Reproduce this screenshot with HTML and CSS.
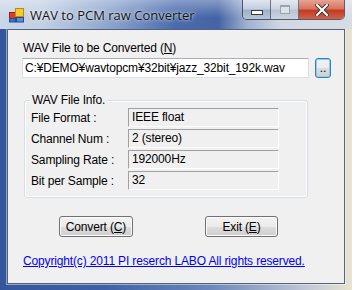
FILE: index.html
```html
<!DOCTYPE html>
<html lang="ja">
<head>
  <meta charset="UTF-8" />
  <title>WAV to PCM raw Converter</title>
  <link rel="stylesheet" href="styles.css">
</head>
<body>
  <div class="window">
    <div class="titlebar">
      <svg class="app-icon" width="16" height="16" viewBox="0 0 16 16">
        <rect x="0.5" y="5.5" width="6" height="6" fill="#e23a22" stroke="#9a2010"/>
        <rect x="6.5" y="1.5" width="8" height="8" fill="#f6cc2a" stroke="#c08a10"/>
        <rect x="0.5" y="11.5" width="6" height="3.5" fill="#3f6fc4" stroke="#234c94"/>
        <rect x="7.5" y="10.5" width="7" height="4.5" fill="#5c8ad6" stroke="#234c94"/>
      </svg>
      <span class="title">WAV to PCM raw Converter</span>
      <div class="caption-btns">
        <div class="cap cap-min"><span class="glyph-min"></span></div>
        <div class="cap cap-max"><span class="glyph-max"></span></div>
        <div class="cap cap-close">
          <svg width="14" height="12" viewBox="0 0 14 12">
            <path d="M2 1 L12 11 M12 1 L2 11" stroke="#3a3a3a" stroke-width="4" stroke-linecap="square"/>
            <path d="M2 1 L12 11 M12 1 L2 11" stroke="#ffffff" stroke-width="2" stroke-linecap="square"/>
          </svg>
        </div>
      </div>
    </div>

    <div class="client">
      <div class="file-label">WAV File to be Converted (<u>N</u>)</div>
      <div class="file-row">
        <input class="file-path" type="text" value="C:¥DEMO¥wavtopcm¥32bit¥jazz_32bit_192k.wav" />
        <button class="browse">..</button>
      </div>

      <div class="group">
        <span class="group-title">WAV File Info.</span>
        <div class="info-row"><span class="info-key">File Format :</span><span class="info-val">IEEE float</span></div>
        <div class="info-row"><span class="info-key">Channel Num :</span><span class="info-val">2 (stereo)</span></div>
        <div class="info-row"><span class="info-key">Sampling Rate :</span><span class="info-val">192000Hz</span></div>
        <div class="info-row"><span class="info-key">Bit per Sample :</span><span class="info-val">32</span></div>
      </div>

      <div class="actions">
        <button class="btn btn-convert">Convert (<u>C</u>)</button>
        <button class="btn btn-exit">Exit (<u>E</u>)</button>
      </div>

      <a class="copyright" href="#">Copyright(c) 2011 PI reserch LABO All rights reserved.</a>
    </div>
  </div>
</body>
</html>
```

FILE: styles.css
```css
body {
  margin: 0;
  width: 352px;
  height: 290px;
  overflow: hidden;
  font-family: "Liberation Sans", Arial, sans-serif;
}
.window {
  width: 352px;
  height: 290px;
  box-sizing: border-box;
  padding: 0 7px 6px 7px;
  background: linear-gradient(90deg, #34569a 0%, #3f62a6 30%, #6d88bb 60%, #c4cad6 88%, #e9e4d0 100%);
}
.titlebar {
  position: relative;
  height: 29px;
  margin: 0 -7px;
  padding-left: 9px;
  display: flex;
  align-items: flex-start;
  background:
    linear-gradient(180deg, rgba(255,255,255,0.35) 0%, rgba(255,255,255,0) 60%),
    linear-gradient(90deg, #c9d6e8 0%, #c2d0e4 12%, #8aa2cc 32%, #4a6aac 50%, #4464a6 62%, #9fb0cf 70%, #d2d8e2 80%, #d8dce4 100%);
}
.app-icon {
  margin-top: 7px;
}
.title {
  margin-left: 5px;
  margin-top: 6px;
  font-family: "Open Sans", sans-serif;
  font-size: 13px;
  color: #141414;
  text-shadow: 0 0 5px rgba(255,255,255,0.8), 0 0 2px rgba(255,255,255,0.6);
}
.caption-btns {
  margin-left: auto;
  margin-right: 7px;
  display: flex;
  height: 19px;
  border: 1px solid rgba(40,50,70,0.75);
  border-top: none;
  border-radius: 0 0 5px 5px;
  overflow: hidden;
}
.cap {
  height: 19px;
  display: flex;
  align-items: center;
  justify-content: center;
}
.cap-min {
  width: 27px;
  border-right: 1px solid rgba(40,50,70,0.6);
  background: linear-gradient(180deg, #dfe6f0 0%, #c3cfe0 45%, #9fb0ca 55%, #b9c6d8 100%);
}
.cap-max {
  width: 27px;
  border-right: 1px solid rgba(40,50,70,0.6);
  background: linear-gradient(180deg, #e4e9f0 0%, #ccd5e2 45%, #b8c4d4 55%, #ccd5e0 100%);
}
.cap-close {
  width: 45px;
  background: linear-gradient(180deg, #e8a393 0%, #d8755f 45%, #c43b22 55%, #d0604a 100%);
}
.glyph-min {
  width: 10px;
  height: 3px;
  margin-top: 5px;
  background: #fff;
  border: 1px solid #3a3a3a;
}
.glyph-max {
  width: 8px;
  height: 6px;
  border: 1px solid #9aa3b0;
  border-top-width: 2px;
  background: #dce2ea;
}

.client {
  width: 338px;
  height: 255px;
  box-sizing: border-box;
  border: 1px solid #566276;
  box-shadow: 0 0 0 1px rgba(255,255,255,0.45);
  background: #f0f0f0;
  padding-top: 11px;
  font-size: 12px;
  letter-spacing: -0.15px;
  color: #000;
}
.file-label {
  margin-left: 15px;
  line-height: 14px;
}
.file-row {
  display: flex;
  margin-top: 3px;
  margin-left: 14px;
}
.file-path {
  width: 287px;
  height: 20px;
  box-sizing: border-box;
  margin: 0;
  padding: 0 2px;
  border: 1px solid #dbdfe6;
  border-top-color: #abadb3;
  background: #fff;
  font-family: "Liberation Sans", Arial, sans-serif;
  font-size: 12px;
  letter-spacing: -0.15px;
  color: #000;
}
.browse {
  width: 16px;
  height: 20px;
  margin-left: 6px;
  padding: 0 0 3px 0;
  box-sizing: border-box;
  border: 1px solid #3c7fb1;
  border-radius: 3px;
  box-shadow: inset 0 0 0 1px #7fd0f6;
  background: linear-gradient(180deg, #f2f2f2 0%, #ebebeb 50%, #dddddd 50%, #cfcfcf 100%);
  font-family: "Liberation Sans", Arial, sans-serif;
  font-size: 12px;
  line-height: 12px;
  display: flex;
  align-items: flex-end;
  justify-content: center;
}

.group {
  position: relative;
  width: 284px;
  box-sizing: border-box;
  margin: 22px 0 0 16px;
  padding: 7px 0 7px 6px;
  border: 1px solid #d5dfe5;
  border-radius: 3px;
  box-shadow: inset 0 0 0 1px #ffffff;
  display: flex;
  flex-direction: column;
  gap: 2px;
}
.group-title {
  position: absolute;
  left: 5px;
  top: -8px;
  padding: 0 2px;
  background: #f0f0f0;
  line-height: 14px;
}
.info-row {
  display: flex;
  align-items: center;
  height: 19px;
}
.info-key {
  width: 97px;
}
.info-val {
  width: 151px;
  height: 19px;
  box-sizing: border-box;
  padding-left: 3px;
  line-height: 17px;
  border: 1px solid;
  border-color: #a0a0a0 #ffffff #ffffff #a0a0a0;
}

.actions {
  display: flex;
  margin: 18px 0 0 51px;
  gap: 72px;
}
.btn {
  height: 21px;
  box-sizing: border-box;
  padding: 0;
  border: 1px solid #707070;
  border-radius: 3px;
  box-shadow: inset 0 0 0 1px #fcfcfc;
  background: linear-gradient(180deg, #f2f2f2 0%, #ebebeb 50%, #dddddd 50%, #cfcfcf 100%);
  font-family: "Liberation Sans", Arial, sans-serif;
  font-size: 12px;
  letter-spacing: -0.15px;
  color: #000;
}
.btn-convert {
  width: 74px;
}
.btn-exit {
  width: 73px;
}
.copyright {
  display: block;
  margin: 17px 0 0 15px;
  line-height: 14px;
  color: #0000ff;
  text-decoration: underline;
}
```
